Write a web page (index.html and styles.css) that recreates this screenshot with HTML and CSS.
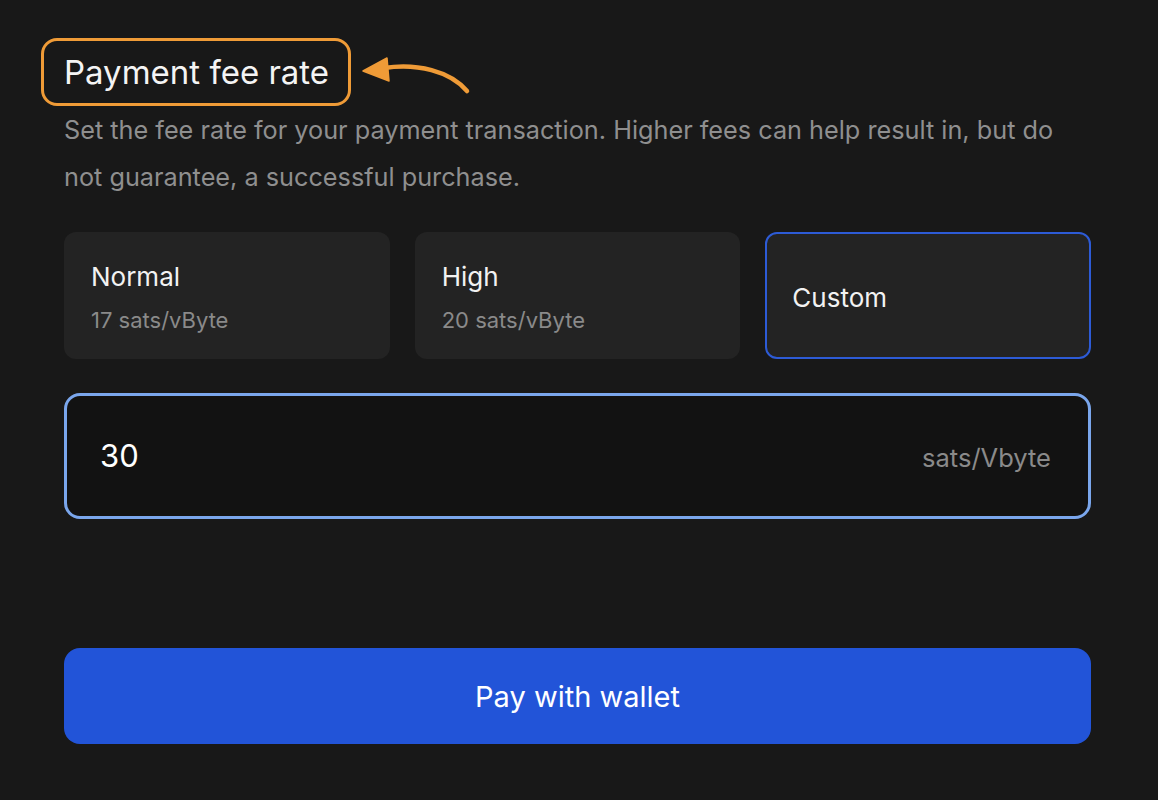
FILE: index.html
```html
<!DOCTYPE html>
<html lang="en">
<head>
<meta charset="utf-8">
<title>Payment fee rate</title>
<link rel="stylesheet" href="styles.css">
</head>
<body>
<main class="panel">
  <header class="header">
    <h1 class="title">Payment fee rate</h1>
    <svg class="arrow" width="120" height="50" viewBox="0 0 120 50" aria-hidden="true">
      <path d="M22 21 C55 16 88 24 105 44" fill="none" stroke="#ef9b37" stroke-width="4.5" stroke-linecap="round"/>
      <path d="M1 24 L25 11 L27 34 Z" fill="#ef9b37" stroke="#ef9b37" stroke-width="1.5" stroke-linejoin="round"/>
    </svg>
  </header>
  <p class="desc">Set the fee rate for your payment transaction. Higher fees can help result in, but do not guarantee, a successful purchase.</p>
  <div class="options">
    <div class="option">
      <div class="opt-name">Normal</div>
      <div class="opt-rate">17 sats/vByte</div>
    </div>
    <div class="option">
      <div class="opt-name">High</div>
      <div class="opt-rate">20 sats/vByte</div>
    </div>
    <div class="option selected">
      <div class="opt-name">Custom</div>
    </div>
  </div>
  <div class="field">
    <span class="field-value">30</span>
    <span class="field-unit">sats/Vbyte</span>
  </div>
  <button class="pay">Pay with wallet</button>
</main>
</body>
</html>
```

FILE: styles.css
```css
* { box-sizing: border-box; }
html, body { margin: 0; padding: 0; }
body {
  background: #181818;
  font-family: Inter, "Noto Sans", sans-serif;
  color: #f2f2f2;
  width: 1158px;
  height: 800px;
  overflow: hidden;
}
.panel {
  padding: 38px 67px 0 64px;
  display: flex;
  flex-direction: column;
}
.header {
  position: relative;
  display: flex;
  align-items: center;
}
.title {
  margin: 0 0 0 -23px;
  height: 68px;
  padding: 0 19px 0 20px;
  border: 3px solid #ef9b37;
  border-radius: 16px;
  display: flex;
  align-items: center;
  font-size: 33px;
  font-weight: 400;
  color: #f4f4f4;
}
.arrow {
  position: absolute;
  left: 298px;
  top: 9px;
}
.desc {
  margin: 1px 0 0;
  font-size: 25.25px;
  line-height: 47px;
  color: #8f8f8f;
  padding-right: 20px;
}
.options {
  margin-top: 31px;
  display: grid;
  grid-template-columns: repeat(3, 1fr);
  gap: 25px;
}
.option {
  height: 127px;
  background: #232323;
  border-radius: 12px;
  padding: 4px 25px 0 25px;
  display: flex;
  flex-direction: column;
  justify-content: center;
  gap: 13px;
  border: 2px solid transparent;
}
.option.selected {
  border-color: #2d5bd6;
}
.opt-name {
  font-size: 26px;
  line-height: 32px;
  color: #f2f2f2;
}
.opt-rate {
  font-size: 22px;
  line-height: 28px;
  color: #8a8a8a;
}
.field {
  margin-top: 34px;
  height: 126px;
  background: #121212;
  border: 3px solid #7aa6ec;
  border-radius: 16px;
  padding: 0 37px 0 33px;
  display: flex;
  align-items: baseline;
  justify-content: space-between;
  line-height: 120px;
}
.field-value {
  font-size: 31px;
  color: #ffffff;
}
.field-unit {
  font-size: 25.5px;
  color: #8a8a8a;
}
.pay {
  margin-top: 129px;
  height: 96px;
  border: none;
  border-radius: 16px;
  background: #2254d8;
  color: #ffffff;
  font-family: Inter, "Noto Sans", sans-serif;
  font-size: 29px;
  cursor: pointer;
}
```
